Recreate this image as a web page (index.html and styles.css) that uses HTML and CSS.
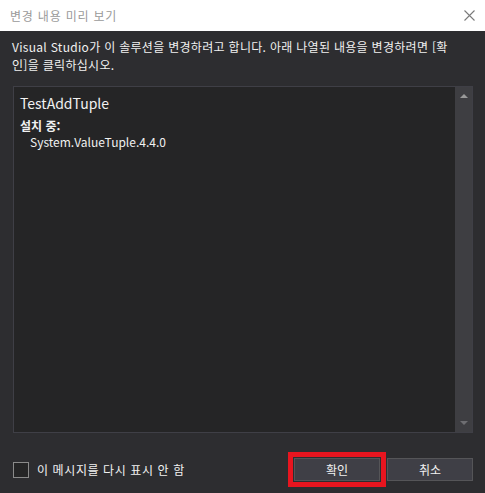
FILE: index.html
```html
<!DOCTYPE html>
<html lang="ko">
<head>
<meta charset="utf-8">
<link rel="stylesheet" href="styles.css">
</head>
<body>
<div class="dialog">
  <div class="titlebar">
    <span class="title">변경 내용 미리 보기</span>
    <svg class="close" width="11" height="11" viewBox="0 0 11 11"><path d="M0.5 0.5 L10.5 10.5 M10.5 0.5 L0.5 10.5" stroke="#7a7a7a" stroke-width="1.1" fill="none"/></svg>
  </div>
  <div class="main">
    <p class="intro">Visual Studio가 이 솔루션을 변경하려고 합니다. 아래 나열된 내용을 변경하려면 [확<br>인]을 클릭하십시오.</p>
    <div class="box">
      <div class="content">
        <div class="project">TestAddTuple</div>
        <div class="section">설치 중:</div>
        <div class="item">System.ValueTuple.4.4.0</div>
      </div>
      <div class="scrollbar">
        <span class="arrow up"></span>
        <span class="arrow down"></span>
      </div>
    </div>
    <div class="footer">
      <label class="check"><span class="checkbox"></span>이 메시지를 다시 표시 안 함</label>
      <div class="buttons">
        <button class="btn highlighted">확인</button>
        <button class="btn">취소</button>
      </div>
    </div>
  </div>
</div>
</body>
</html>
```
FILE: styles.css
```css
html, body {
  margin: 0;
  padding: 0;
  background: #2d2d30;
}
body {
  width: 485px;
  height: 493px;
  overflow: hidden;
  font-family: "Noto Sans CJK KR", "Noto Sans", sans-serif;
  font-size: 12px;
  color: #f1f1f1;
}
.dialog {
  display: flex;
  flex-direction: column;
  height: 493px;
}
.titlebar {
  height: 31px;
  background: #ffffff;
  display: flex;
  align-items: center;
  justify-content: space-between;
  padding: 0 10px 0 10px;
  box-sizing: border-box;
}
.title {
  color: #9a9a9a;
  font-size: 12px;
  line-height: 16px;
  letter-spacing: 0.8px;
}
.close {
  margin-right: 0;
}
.main {
  flex: 1;
  display: flex;
  flex-direction: column;
  padding: 0 12px 0 13px;
}
.intro {
  margin: 7px 0 0 -1px;
  line-height: 18px;
  font-size: 12px;
  letter-spacing: 0.3px;
  white-space: nowrap;
}
.box {
  margin-top: 12px;
  height: 347px;
  box-sizing: border-box;
  border: 1px solid #3f3f46;
  background: #252526;
  display: flex;
}
.content {
  flex: 1;
  padding: 6px 0 0 6px;
}
.project {
  font-size: 14px;
  line-height: 20px;
  color: #f1f1f1;
}
.section {
  margin-top: 5px;
  font-weight: bold;
  line-height: 16px;
}
.item {
  padding-left: 10px;
  line-height: 16px;
}
.scrollbar {
  width: 17px;
  background: #3e3e42;
  display: flex;
  flex-direction: column;
  justify-content: space-between;
  align-items: center;
  padding: 7px 0 7px;
}
.arrow {
  width: 0;
  height: 0;
  border-left: 4px solid transparent;
  border-right: 4px solid transparent;
}
.arrow.up {
  border-bottom: 4px solid #999999;
}
.arrow.down {
  border-top: 4px solid #6e6e72;
}
.footer {
  display: flex;
  justify-content: space-between;
  align-items: center;
  margin-top: 25px;
}
.check {
  display: flex;
  align-items: center;
  gap: 8px;
  line-height: 16px;
  font-size: 12px;
  letter-spacing: 0.6px;
}
.checkbox {
  width: 14px;
  height: 14px;
  border: 1px solid #8a8a8a;
  background: #252526;
}
.buttons {
  display: flex;
  gap: 7px;
}
.btn {
  width: 86px;
  height: 23px;
  background: #3f3f46;
  border: 1px solid #555558;
  color: #f1f1f1;
  font-family: "Noto Sans CJK KR", "Noto Sans", sans-serif;
  font-size: 12px;
  padding: 0;
}
.btn.highlighted {
  outline: 5px solid #e8151f;
  outline-offset: 1px;
}
```
